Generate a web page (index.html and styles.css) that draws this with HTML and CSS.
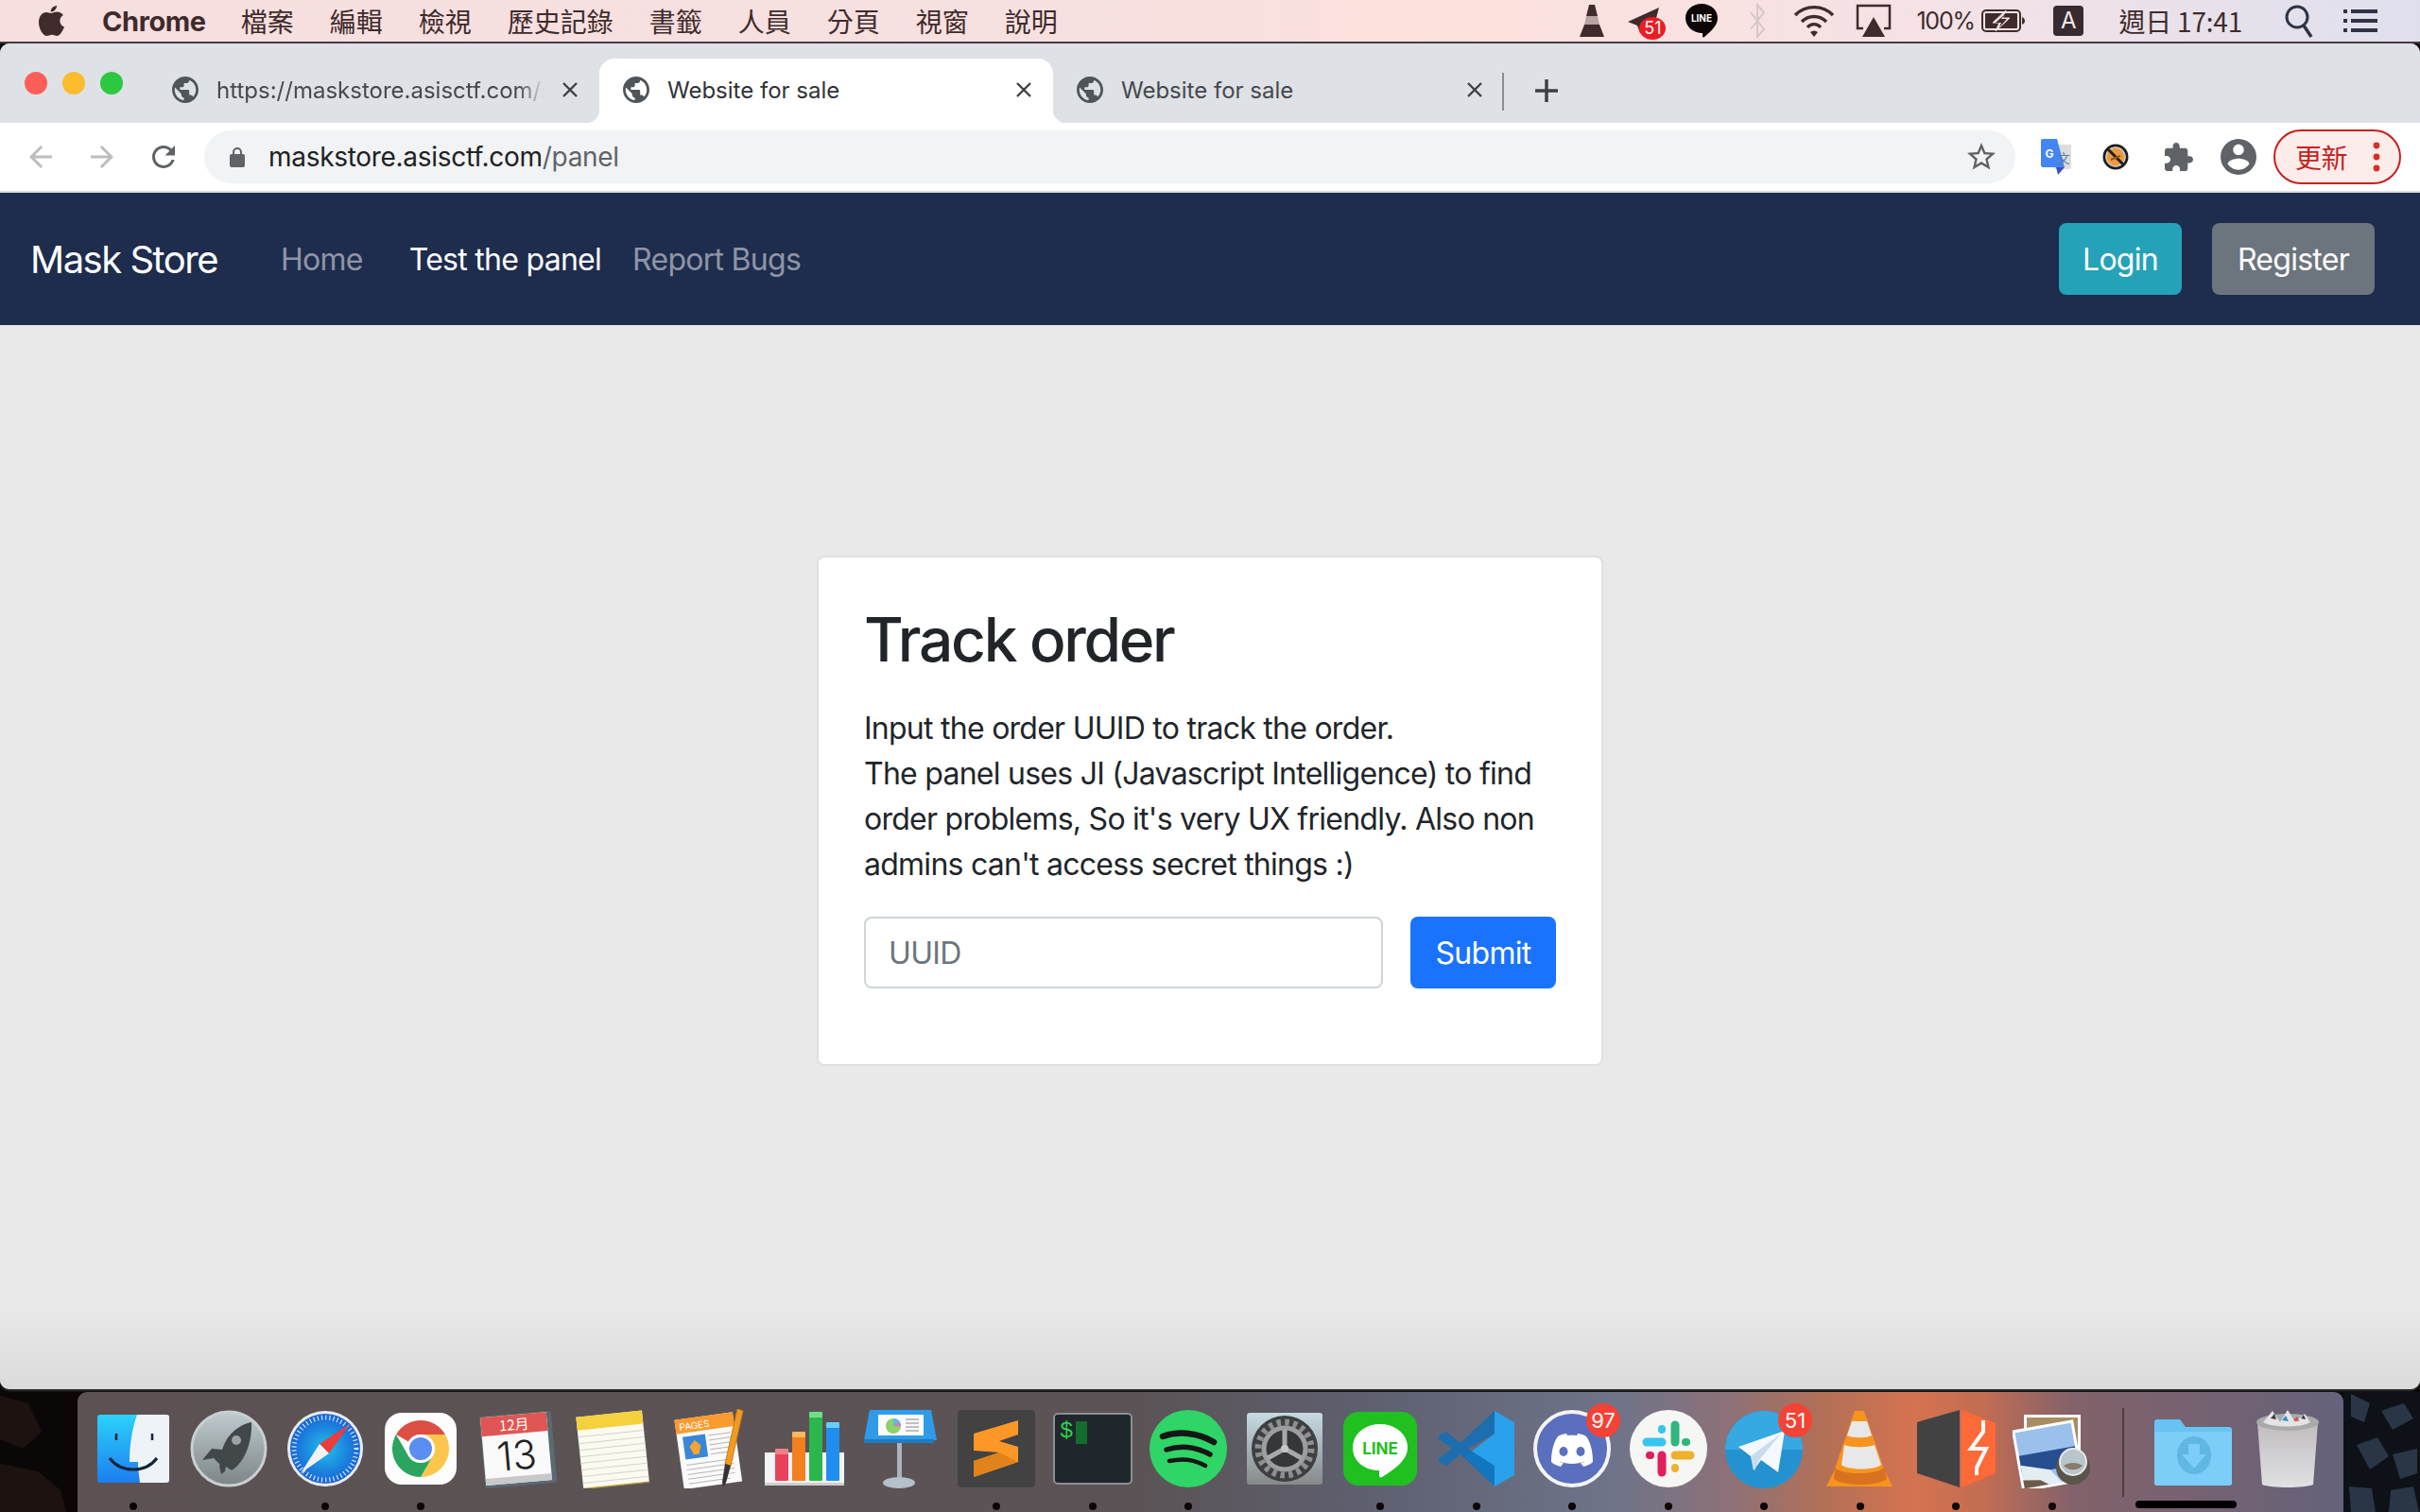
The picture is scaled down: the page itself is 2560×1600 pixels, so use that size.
FILE: index.html
```html
<!DOCTYPE html>
<html lang="en">
<head>
    <meta charset="UTF-8">
    <title>Website for sale</title>
    <link rel="stylesheet" href="styles.css">
</head>
<body>
    <!-- mac menu bar -->
    <div class="menubar">
        <svg class="apple" width="28" height="34" viewBox="0 0 28 34"><path fill="#3f2b2b" d="M19 1c.3 3-2.7 6.8-6.3 6.5C12.300 4.200 15.600 1.300 19 1zM13 9c1.500 0 3.500-1.500 6.500-1.500 2.400 0 4.900 1.200 6.400 3.500-5.300 3-4.400 10.500 1.100 12.500-1.600 4-4.600 9.500-7.500 9.500-2 0-3.200-1.300-5.500-1.300-2.400 0-3.700 1.300-5.500 1.300C4.500 33 0 25.500 0 18.500 0 12 4 8 8 8c2 0 3.600 1 5 1z"/></svg>
        <b class="app-name">Chrome</b>
        <span>檔案</span><span>編輯</span><span>檢視</span><span>歷史記錄</span><span>書籤</span><span>人員</span><span>分頁</span><span>視窗</span><span>說明</span>
        <div class="status">
            <svg width="30" height="36" viewBox="0 0 30 36"><path fill="#3f2b2b" d="M12 1h6l3 12H9z"/><path fill="#b9a3a3" d="M9 13h12l2 9H7z"/><path fill="#3f2b2b" d="M7 22h16l5 13H2z"/></svg>
            <span class="tray-send"><svg width="34" height="30" viewBox="0 0 34 30"><path fill="#3f2b2b" d="M33 1 0 16l10 4 3 8 4-5 9 4z"/></svg><i class="tray-badge">51</i></span>
            <svg class="tray-line-icon" width="36" height="38" viewBox="0 0 36 38"><path fill="#0d0506" d="M18 1c9.500 0 17 6.500 17 15 0 8-7 14-14 20-1 1-2 .5-2-1v-3C9 32 1 25 1 16 1 7.500 8.500 1 18 1z"/><text x="18" y="20" class="tray-line">LINE</text></svg>
            <svg class="tray-bt" width="20" height="38" viewBox="0 0 20 38"><path fill="none" stroke="#d7c6c8" stroke-width="2" d="M3 10l14 18-7 8V2l7 8L3 28"/></svg>
            <svg class="tray-wifi" width="44" height="36" viewBox="0 0 44 36"><g fill="none" stroke="#3f2b2b" stroke-width="3.400"><path d="M2 12a28 28 0 0 1 40 0"/><path d="M9 19a18 18 0 0 1 26 0"/><path d="M15 25a9 9 0 0 1 14 0"/></g><path fill="#3f2b2b" d="M22 35l-4-5a6 6 0 0 1 8 0z"/></svg>
            <svg class="tray-air" width="38" height="36" viewBox="0 0 38 36"><path fill="none" stroke="#3f2b2b" stroke-width="2.500" d="M8 26H2V2h34v24h-6"/><path fill="#3f2b2b" d="M19 14l12 21H7z"/></svg>
            <span class="pct">100%</span>
            <svg class="tray-batt" width="46" height="24" viewBox="0 0 46 24"><rect x="1" y="1" width="40" height="22" rx="4" fill="none" stroke="#3f2b2b" stroke-width="2"/><rect x="4" y="4" width="34" height="16" rx="1" fill="#3f2b2b"/><path fill="#f3e2e5" stroke="#f3e2e5" d="M26 1 12 14h7l-4 9 15-14h-8z"/><path fill="#3f2b2b" d="M25 5 15 14h6l-2 5 8-9h-6zM43 8c2 1 3 2 3 4s-1 3-3 4z"/></svg>
            <span class="input-a">A</span>
            <span class="clock">週日 17:41</span>
            <svg class="tray-search" width="32" height="36" viewBox="0 0 32 36"><circle cx="14" cy="14" r="11" fill="none" stroke="#2f3346" stroke-width="3"/><path stroke="#2f3346" stroke-width="3.500" d="M21 23l8 12"/></svg>
            <svg class="tray-list" width="36" height="24" viewBox="0 0 36 24"><g fill="#2f3346"><rect y="0" width="4" height="4"/><rect x="8" y="0" width="28" height="4"/><rect y="10" width="4" height="4"/><rect x="8" y="10" width="28" height="4"/><rect y="20" width="4" height="4"/><rect x="8" y="20" width="28" height="4"/></g></svg>
        </div>
    </div>

    <div class="window">
        <!-- tabs -->
        <div class="tabstrip">
            <div class="traffic">
                <i class="light red"></i><i class="light yellow"></i><i class="light green"></i>
            </div>
            <div class="tab">
                <svg class="globe" viewBox="2 2 20 20"><path fill="#50555a" d="M12 2C6.480 2 2 6.480 2 12s4.480 10 10 10 10-4.480 10-10S17.520 2 12 2zm-1 17.930c-3.950-.49-7-3.850-7-7.930 0-.62.08-1.210.21-1.790L9 15v1c0 1.100.9 2 2 2v1.930zm6.900-2.540c-.26-.81-1-1.390-1.900-1.390h-1v-3c0-.55-.45-1-1-1H8v-2h2c.55 0 1-.45 1-1V7h2c1.100 0 2-.9 2-2v-.41c2.930 1.190 5 4.060 5 7.410 0 2.080-.8 3.970-2.100 5.390z"/></svg>
                <span class="tab-title fade">https://maskstore.asisctf.com/s</span>
                <svg class="tab-close" viewBox="0 0 16 16"><path stroke="#3c4043" stroke-width="2.4" d="M1 1l14 14M15 1 1 15"/></svg>
            </div>
            <div class="tab active">
                <svg class="globe" viewBox="2 2 20 20"><path fill="#50555a" d="M12 2C6.480 2 2 6.480 2 12s4.480 10 10 10 10-4.480 10-10S17.520 2 12 2zm-1 17.930c-3.950-.49-7-3.850-7-7.930 0-.62.08-1.210.21-1.790L9 15v1c0 1.100.9 2 2 2v1.930zm6.900-2.540c-.26-.81-1-1.390-1.900-1.390h-1v-3c0-.55-.45-1-1-1H8v-2h2c.55 0 1-.45 1-1V7h2c1.100 0 2-.9 2-2v-.41c2.930 1.190 5 4.060 5 7.410 0 2.080-.8 3.970-2.100 5.390z"/></svg>
                <span class="tab-title">Website for sale</span>
                <svg class="tab-close" viewBox="0 0 16 16"><path stroke="#3c4043" stroke-width="2.4" d="M1 1l14 14M15 1 1 15"/></svg>
            </div>
            <div class="tab last">
                <svg class="globe" viewBox="2 2 20 20"><path fill="#50555a" d="M12 2C6.480 2 2 6.480 2 12s4.480 10 10 10 10-4.480 10-10S17.520 2 12 2zm-1 17.930c-3.950-.49-7-3.850-7-7.930 0-.62.08-1.210.21-1.790L9 15v1c0 1.100.9 2 2 2v1.930zm6.900-2.540c-.26-.81-1-1.390-1.900-1.390h-1v-3c0-.55-.45-1-1-1H8v-2h2c.55 0 1-.45 1-1V7h2c1.100 0 2-.9 2-2v-.41c2.930 1.190 5 4.060 5 7.410 0 2.080-.8 3.970-2.100 5.390z"/></svg>
                <span class="tab-title">Website for sale</span>
                <svg class="tab-close" viewBox="0 0 16 16"><path stroke="#3c4043" stroke-width="2.4" d="M1 1l14 14M15 1 1 15"/></svg>
            </div>
            <svg class="new-tab" width="26" height="26" viewBox="0 0 26 26"><path stroke="#3c4043" stroke-width="3.500" d="M13 1v24M1 13h24"/></svg>
        </div>

        <!-- toolbar -->
        <div class="toolbar">
            <svg class="tool" width="36" height="36" viewBox="0 0 24 24"><path fill="#bdbdbd" d="M20 11H7.830l5.590-5.590L12 4l-8 8 8 8 1.410-1.410L7.830 13H20v-2z"/></svg>
            <svg class="tool flip" width="36" height="36" viewBox="0 0 24 24"><path fill="#bdbdbd" d="M20 11H7.830l5.590-5.590L12 4l-8 8 8 8 1.410-1.410L7.830 13H20v-2z"/></svg>
            <svg class="tool" width="36" height="36" viewBox="0 0 24 24"><path fill="#5f6368" d="M17.650 6.350C16.200 4.900 14.210 4 12 4c-4.420 0-7.990 3.580-7.990 8s3.570 8 7.990 8c3.730 0 6.840-2.550 7.730-6h-2.080c-.82 2.330-3.040 4-5.650 4-3.310 0-6-2.690-6-6s2.690-6 6-6c1.660 0 3.140.69 4.220 1.780L13 11h7V4l-2.350 2.350z"/></svg>
            <div class="omnibox">
                <svg width="16" height="22" viewBox="0 0 16 22"><path fill="none" stroke="#5f6368" stroke-width="2" d="M4 9V6a4 4 0 0 1 8 0v3"/><rect y="8" width="16" height="14" rx="2" fill="#5f6368"/></svg>
                <span class="url">maskstore.asisctf.com<span class="url-path">/panel</span></span>
                <svg class="star" width="36" height="36" viewBox="0 0 24 24"><path fill="#5f6368" d="M22 9.240l-7.190-.62L12 2 9.190 8.630 2 9.240l5.460 4.730L5.820 21 12 17.270 18.180 21l-1.630-7.030L22 9.240zM12 15.400l-3.760 2.270 1-4.280-3.320-2.880 4.380-.38L12 6.100l1.710 4.040 4.380.38-3.320 2.880 1 4.280L12 15.400z"/></svg>
            </div>
            <div class="extensions">
                <svg width="32" height="38" viewBox="0 0 32 38"><path fill="#ddd" d="M14 6h16a2 2 0 0 1 2 2v22a2 2 0 0 1-2 2H14z"/><path fill="#4285f4" d="M2 0h15l8 30H2a2 2 0 0 1-2-2V2a2 2 0 0 1 2-2z"/><path fill="#3a4fb5" d="M16 30h9l-7 8z"/><text x="9" y="20" class="ext-g">G</text><text x="24" y="25" class="ext-wen">文</text></svg>
                <svg width="28" height="28" viewBox="0 0 28 28"><circle cx="14" cy="14" r="12" fill="#ee9a3c" stroke="#1e1e1e" stroke-width="3"/><circle cx="14" cy="14" r="10" fill="none" stroke="#c9c9c9" stroke-width="1.500"/><path stroke="#1e1e1e" stroke-width="3" d="M6 6l16 16"/><path stroke="#8a5a20" stroke-width="2" d="M9 17l10-4"/></svg>
                <svg class="ext-puzzle" width="30" height="30" viewBox="2 1 21 21"><path fill="#5f6368" d="M20.500 11H19V7c0-1.100-.9-2-2-2h-4V3.500C13 2.120 11.880 1 10.500 1S8 2.120 8 3.500V5H4c-1.100 0-1.990.9-1.990 2v3.800H3.500c1.490 0 2.700 1.210 2.700 2.700s-1.210 2.700-2.700 2.700H2V20c0 1.100.9 2 2 2h3.800v-1.500c0-1.490 1.210-2.700 2.700-2.700 1.490 0 2.700 1.210 2.700 2.700V22H17c1.100 0 2-.9 2-2v-4h1.500c1.380 0 2.500-1.120 2.500-2.500S21.880 11 20.500 11z"/></svg>
                <svg class="ext-profile" width="38" height="38" viewBox="2 2 20 20"><path fill="#5f6368" d="M12 2C6.480 2 2 6.480 2 12s4.480 10 10 10 10-4.480 10-10S17.520 2 12 2zm0 3c1.660 0 3 1.340 3 3s-1.340 3-3 3-3-1.340-3-3 1.340-3 3-3zm0 14.200c-2.500 0-4.710-1.280-6-3.220.03-1.990 4-3.080 6-3.080 1.990 0 5.970 1.090 6 3.080-1.290 1.940-3.500 3.220-6 3.220z"/></svg>
                <div class="update">更新<svg width="8" height="32" viewBox="0 0 8 32"><g fill="#d93025"><circle cx="4" cy="4" r="3.400"/><circle cx="4" cy="16" r="3.400"/><circle cx="4" cy="28" r="3.400"/></g></svg></div>
            </div>
        </div>

        <!-- page -->
        <nav class="navbar">
            <a class="brand">Mask Store</a>
            <a class="nav-link home">Home</a>
            <a class="nav-link current">Test the panel</a>
            <a class="nav-link">Report Bugs</a>
            <div class="nav-btns">
                <button class="btn btn-info">Login</button>
                <button class="btn btn-grey">Register</button>
            </div>
        </nav>
        <main class="page">
            <div class="card">
                <h2>Track order</h2>
                <p>Input the order UUID to track the order.<br>The panel uses JI (Javascript Intelligence) to find order problems, So it's very UX friendly. Also non admins can't access secret things :)</p>
                <form class="track-form">
                    <input type="text" placeholder="UUID">
                    <button type="button" class="btn btn-primary">Submit</button>
                </form>
            </div>
        </main>
    </div>

    <!-- dock -->
    <div class="bottom">
        <svg class="rocks" viewBox="0 0 82 127" preserveAspectRatio="none"><rect width="82" height="127" fill="#0c0707"/><path fill="#1c1310" d="M0 4l30 8 14 30-20 18L0 50zM0 76l40 8 24 20 6 23H0z"/></svg>
        <div class="dock">
            <div class="app on"><svg viewBox="0 0 84 84"><defs><linearGradient id="fi" x1="0" y1="0" x2="0" y2="1"><stop offset="0" stop-color="#2bd2fb"/><stop offset="1" stop-color="#1d7df0"/></linearGradient></defs><rect x="4" y="6" width="76" height="72" rx="3" fill="url(#fi)"/><path fill="#eef3f8" d="M46 6h31a3 3 0 0 1 3 3v66a3 3 0 0 1-3 3H49c-1-8-2-15-2-22h-9c0-18 3-36 8-50z"/><path stroke="#16233a" stroke-width="2.500" d="M24 26v7M62 26v7"/><path fill="none" stroke="#16233a" stroke-width="3" d="M17 52c12 16 38 16 50 0"/></svg></div>
            <div class="app"><svg viewBox="0 0 84 84"><defs><linearGradient id="lp" x1="0" y1="0" x2="0" y2="1"><stop offset="0" stop-color="#c0ccd0"/><stop offset="1" stop-color="#7c8486"/></linearGradient></defs><circle cx="42" cy="42" r="39" fill="url(#lp)" stroke="#c9cfd0" stroke-width="3"/><path fill="#42474a" d="M66 14c-14 3-26 13-31 29l-11-1-10 12 12-2 7 7-1 1 2 9 4-3 1-5 6 4c13-8 22-28 21-51z"/><circle cx="50" cy="33" r="5" fill="#9aa3a5"/></svg></div>
            <div class="app on"><svg viewBox="0 0 84 84"><defs><radialGradient id="sf"><stop offset="0" stop-color="#1fc0e8"/><stop offset="1" stop-color="#1a62d8"/></radialGradient></defs><circle cx="42" cy="42" r="40" fill="#e8edf0"/><circle cx="42" cy="42" r="37" fill="url(#sf)"/><circle cx="42" cy="42" r="33" fill="none" stroke="#cfe8fa" stroke-width="5" stroke-dasharray="1.200 3"/><path fill="#ef3b3b" d="M68 16 36 37l10 10z"/><path fill="#f3f3f3" d="M16 68l20-31 10 10z"/></svg></div>
            <div class="app on"><svg viewBox="0 0 84 84"><rect x="4" y="4" width="76" height="76" rx="18" fill="#fdfdfd"/><path fill="#db4f45" d="M16 27a30 30 0 0 1 52 0H42a15 15 0 0 0-13 7.500z"/><path fill="#fcc64d" d="M68 27a30 30 0 0 1-26 45l13-22.500A15 15 0 0 0 42 27z"/><path fill="#2aa45f" d="M42 72a30 30 0 0 1-26-45l13 22.500a15 15 0 0 0 26 0z"/><circle cx="42" cy="42" r="15" fill="#fff"/><circle cx="42" cy="42" r="12" fill="#5a8ef0"/></svg></div>
            <div class="app"><svg viewBox="0 0 84 84"><g transform="rotate(-5 42 42)"><rect x="5" y="5" width="76" height="76" rx="2" fill="#5a6a74"/><rect x="6" y="6" width="70" height="72" fill="#fafafa"/><rect x="6" y="6" width="70" height="20" fill="#e05654"/><text x="41" y="22" class="cal-month">12月</text><text x="41" y="64" class="cal-day">13</text><rect x="6" y="71" width="70" height="7" fill="#c9c9c9"/></g></svg></div>
            <div class="app"><svg viewBox="0 0 84 84"><g transform="rotate(-6 42 42)"><rect x="7" y="5" width="70" height="76" fill="#fbfaf0"/><rect x="7" y="5" width="70" height="14" fill="#f6d13e"/><path stroke="#d6d4c8" stroke-width="1" d="M7 26h70M7 33h70M7 40h70M7 47h70M7 54h70M7 61h70M7 68h70M7 75h70"/><path stroke="#b99a3c" stroke-width="1.500" d="M7 81h70"/></g></svg></div>
            <div class="app"><svg viewBox="0 0 84 84"><g transform="rotate(-8 42 42)"><rect x="10" y="7" width="62" height="74" fill="#fafafa"/><rect x="10" y="7" width="62" height="15" fill="#f99b2e"/><text x="14" y="19" class="pages-label">PAGES</text><rect x="16" y="26" width="24" height="24" fill="#3a86d8"/><path fill="#f6a431" d="M28 31l6 6-3 9h-6l-3-9z"/><path stroke="#b5b5b5" d="M43 28h24M43 33h24M43 38h24M43 43h24M43 48h24M16 56h50M16 61h50M16 66h50M16 71h50M16 76h44"/></g><path fill="#f39a24" stroke="#c97a16" d="M72 0l6 2-13 58-6-2z"/><path fill="#333" d="M59 58l6 2-5 18-3 5-1-6z"/></svg></div>
            <div class="app"><svg viewBox="0 0 84 84"><path fill="#f4f4f4" d="M0 46h84v34H0z"/><rect y="78" width="84" height="3" fill="#cfcfcf"/><rect x="11" y="44" width="14" height="32" rx="1" fill="#e8435a"/><rect x="11" y="42" width="14" height="6" rx="1" fill="#f27f88"/><rect x="29" y="26" width="14" height="50" rx="1" fill="#f37f1e"/><rect x="29" y="24" width="14" height="6" rx="1" fill="#fbb65e"/><rect x="47" y="4" width="14" height="72" rx="1" fill="#2cb64e"/><rect x="47" y="3" width="14" height="6" rx="1" fill="#6fe08a"/><rect x="65" y="16" width="14" height="60" rx="1" fill="#1f8ef0"/><rect x="65" y="14" width="14" height="6" rx="1" fill="#69cdfc"/></svg></div>
            <div class="app"><svg viewBox="0 0 84 84"><path fill="#2f9be8" d="M9 1h65l6 32H3z"/><rect x="3" y="32" width="74" height="4" fill="#1d7cc4"/><rect x="18" y="6" width="48" height="22" fill="#fafafa"/><circle cx="34" cy="18" r="8" fill="#8fd16a"/><path fill="#5fb6e8" d="M34 18v-8a8 8 0 0 1 7 4z"/><path fill="#e86ac4" d="M34 18l7-4a8 8 0 0 1 1 4z"/><path stroke="#888" d="M47 11h14M47 15h14M47 19h14M47 23h14"/><rect x="38" y="36" width="5" height="40" fill="#a8b4be"/><ellipse cx="40" cy="78" rx="17" ry="6" fill="#b4c0ca"/></svg></div>
            <div class="app on"><svg viewBox="0 0 84 84"><rect x="1" y="1" width="82" height="82" rx="4" fill="#424242"/><path fill="#fd9827" d="M18 26 65 12V27L45 34 65 40V56L18 72V55L45 46 18 44z"/><path fill="#e0831c" d="M18 55 45 46 65 56 18 72z"/></svg></div>
            <div class="app on"><svg viewBox="0 0 84 84"><rect x="1" y="5" width="82" height="74" rx="4" fill="#1f272d" stroke="#8a9095" stroke-width="2"/><text x="7" y="30" class="term-prompt">$</text><rect x="24" y="13" width="12" height="24" fill="#166c2c"/></svg></div>
            <div class="app on"><svg viewBox="0 0 84 84"><circle cx="42" cy="42" r="41" fill="#2fd566"/><g fill="none" stroke="#161616" stroke-linecap="round"><path stroke-width="6.500" d="M15 29c17-6 37-4 54 6"/><path stroke-width="5.500" d="M19 43c15-5 31-3 46 5"/><path stroke-width="4.500" d="M22 55c13-3 26-2 38 5"/></g></svg></div>
            <div class="app"><svg viewBox="0 0 84 84"><defs><linearGradient id="sp" x1="0" y1="0" x2="0" y2="1"><stop offset="0" stop-color="#c7dae2"/><stop offset="1" stop-color="#86898a"/></linearGradient></defs><rect x="2" y="4" width="80" height="76" rx="3" fill="url(#sp)"/><circle cx="42" cy="42" r="35" fill="#3d3f41"/><circle cx="42" cy="42" r="28" fill="none" stroke="#8d8f91" stroke-width="7" stroke-dasharray="4.500 4.300"/><circle cx="42" cy="42" r="22" fill="none" stroke="#9c9ea0" stroke-width="5"/><circle cx="42" cy="42" r="19" fill="#35373a"/><path stroke="#a7a9ab" stroke-width="5" d="M42 42V22M42 42l18 10M42 42l-18 10"/><circle cx="42" cy="42" r="4" fill="#c4c6c8"/></svg></div>
            <div class="app on"><svg viewBox="0 0 84 84"><rect x="3" y="3" width="78" height="78" rx="16" fill="#1fc01f"/><path fill="#fff" d="M42 16c16 0 29 10 29 25 0 14-16 24-27 31-2 1-3 0-3-2v-5C25 65 13 55 13 41c0-15 13-25 29-25z"/><text x="42" y="48" class="line-word">LINE</text></svg></div>
            <div class="app on"><svg viewBox="0 0 84 84"><path fill="#2aa1ec" d="M61 2 82 14v56L61 82 30 50l31-24z"/><path fill="#0f70b7" d="M61 2 25 36 10 24 2 28v4l14 10L2 52v4l8 4 15-12 36 34V60L33 42l28-16z" opacity=".85"/></svg></div>
            <div class="app on"><svg viewBox="0 0 84 84"><circle cx="42" cy="42" r="39" fill="#5a6fbe" stroke="#f4f4f4" stroke-width="4"/><path fill="#fff" d="M20 56c0-12 3-22 7-27 5-3 9-3 9-3l1 2c3-.5 7-.5 10 0l1-2s4 0 9 3c4 5 7 15 7 27-3 3-7 4-10 5l-3-4c2 0 3-1 5-2-9 4-19 4-28 0 2 1 3 2 5 2l-3 4c-3-1-7-2-10-5z"/><ellipse cx="33" cy="45" rx="4.500" ry="5" fill="#5a6fbe"/><ellipse cx="51" cy="45" rx="4.500" ry="5" fill="#5a6fbe"/></svg><i class="badge">97</i></div>
            <div class="app on"><svg viewBox="0 0 84 84"><circle cx="42" cy="42" r="41" fill="#f6f6f4"/><g stroke-linecap="round" stroke-width="9"><path stroke="#36c5f0" d="M19 35h16"/><path stroke="#2eb67d" d="M49 17v18"/><path stroke="#2eb67d" stroke-width="8" d="M60 35h1"/><path stroke="#ecb22e" d="M49 49h16"/><path stroke="#ecb22e" stroke-width="8" d="M49 62v1"/><path stroke="#e01e5a" d="M35 49v18"/><path stroke="#e01e5a" stroke-width="8" d="M22 49h1"/><path stroke="#36c5f0" stroke-width="8" d="M35 21v1"/></g></svg></div>
            <div class="app on"><svg viewBox="0 0 84 84"><circle cx="42" cy="43" r="41" fill="#2492d0"/><path fill="#36a8e2" d="M42 2a41 41 0 0 1 41 41H1A41 41 0 0 1 42 2z"/><path fill="#f4f9fd" d="M15 40 64 23l-7 44-18-13-8 11-3-15z"/><path fill="#c8dcee" d="M28 50 60 26 37 54l-5 11z"/></svg><i class="badge">51</i></div>
            <div class="app on"><svg viewBox="0 0 84 84"><path fill="#f7941e" d="M36 2h10l22 64 8 16H6l8-16z"/><path fill="#e8e8e8" d="M33 13h16l5 15c-5 3-21 3-26 0zM25 38c7 3 25 3 32 0l7 21c-6 6-36 6-42 0z"/><path fill="#d97220" d="M15 62c8 8 44 8 52 0l3 12c-10 8-46 8-56 0z"/></svg></div>
            <div class="app on"><svg viewBox="0 0 84 84"><path fill="#424242" d="M1 14 46 1v82L1 68z"/><path fill="#fd6a38" d="M48 1l36 14v53L48 83z"/><path fill="none" stroke="#fff" stroke-width="4" d="M71 12v12L58 42h16L64 62v8"/></svg></div>
            <div class="app on"><svg viewBox="0 0 84 84"><rect x="12" y="6" width="60" height="50" fill="#fff"/><rect x="15" y="9" width="54" height="44" fill="#a88d63"/><g transform="rotate(-10 40 48)"><rect x="4" y="16" width="66" height="66" fill="#fff"/><rect x="7" y="19" width="60" height="60" fill="#9cc0ec"/><path fill="#274e8e" d="M7 44h60v20H7z"/><path fill="#e4eef2" d="M7 54l30 10 10 15H7z"/><path fill="#6f5a48" d="M7 70l18 3 8 6H7z"/></g><circle cx="64" cy="62" r="18" fill="#5c534a"/><circle cx="64" cy="56" r="14" fill="#b9c4cc" stroke="#e8e8e8" stroke-width="2"/><path fill="#8a7a68" d="M54 60c6-4 14-4 20 0a14 14 0 0 1-20 0z"/></svg></div>
            <i class="dock-sep"></i>
            <div class="stack">
                <div class="app small"><svg viewBox="0 0 84 84"><path fill="#66c3f2" d="M1 14a3 3 0 0 1 3-3h24l6 8h46a3 3 0 0 1 3 3v56a3 3 0 0 1-3 3H4a3 3 0 0 1-3-3z"/><path fill="#7ccdf7" d="M1 24h82v54a3 3 0 0 1-3 3H4a3 3 0 0 1-3-3z"/><ellipse cx="43" cy="49" rx="18" ry="20" fill="#5fb7e2"/><path fill="#7ccdf7" d="M37 37h12v11h7L43 63 30 48h7z"/></svg></div>
                <div class="app small"><svg viewBox="0 0 84 84"><defs><linearGradient id="tr" x1="0" y1="0" x2="0" y2="1"><stop offset="0" stop-color="#c9c6c6"/><stop offset="1" stop-color="#eef0f0"/></linearGradient></defs><path fill="url(#tr)" opacity=".9" d="M10 14h64l-5 66c-10 4-44 4-54 0z"/><ellipse cx="42" cy="14" rx="33" ry="9" fill="#a9abab"/><path fill="#e4e4e4" d="M16 14l10-12 8 12 8-13 8 13 10-9 6 9c-10 6-40 6-50 0z"/><path fill="#2e8ecf" d="M36 12l4-5 3 6z"/><path fill="#d24a4a" d="M48 12l4-4 2 5z"/><path fill="#3a3f44" d="M24 10l4-5 2 6zM56 10l3-4 2 5z"/></svg></div>
            </div>
        </div>
        <svg class="rocks" viewBox="0 0 81 127" preserveAspectRatio="none"><rect width="81" height="127" fill="#0e1218"/><path fill="#2a3646" d="M8 2l20 10-6 20-14-6zM40 20l24-8 10 16-22 12zM14 56l22-8 12 20-20 14zM52 66l26-6v26l-18 6zM6 100l24 2 4 25H8zM50 104l24-4 6 27H48z"/></svg>
    </div>
</body>
</html>
```

FILE: styles.css
```css
* {
    box-sizing: border-box;
}
html, body {
    margin: 0;
    height: 100%;
}
body {
    width: 2560px;
    height: 1600px;
    overflow: hidden;
    display: flex;
    flex-direction: column;
    background: #0c0707;
    font-family: Inter, "Noto Sans", sans-serif;
    color: #212529;
}

/* menu bar */
.menubar {
    height: 46px;
    flex: none;
    display: flex;
    align-items: center;
    gap: 38px;
    padding-left: 41px;
    border-bottom: 2px solid #4a3b40;
    background: linear-gradient(90deg, #f7dfe0 0%, #f7e0e0 45%, #fde1dc 60%, #f4e2e6 80%, #dfe0ee 100%);
    font-family: "Noto Sans CJK TC", sans-serif;
    font-size: 28px;
    color: #3f2b2b;
}
.app-name {
    margin-left: 1px;
    margin-right: -1px;
    font-family: Inter, sans-serif;
    font-size: 29px;
    letter-spacing: -.4px;
}
.status {
    margin-left: auto;
    display: flex;
    align-items: center;
    gap: 26px;
    padding-right: 45px;
}
.tray-send {
    position: relative;
    display: flex;
    margin-left: -3px;
}
.tray-badge {
    position: absolute;
    left: 12px;
    top: 11px;
    width: 28px;
    height: 24px;
    border-radius: 50%;
    background: #ec1c24;
    color: #fff;
    font: normal 18px/24px Inter, sans-serif;
    text-align: center;
}
.tray-line {
    font: bold 10px Inter, sans-serif;
    fill: #fff;
    text-anchor: middle;
}
.tray-bt { margin-left: 5px; }
.tray-wifi { margin-left: 2px; }
.tray-air { margin-left: -4px; }
.tray-batt { margin-left: -16px; }
.tray-search { margin-left: 18px; }
.tray-list { margin-left: 5px; }
.pct {
    width: 59px;
    font-family: Inter, sans-serif;
    font-size: 25px;
    letter-spacing: -1.2px;
    white-space: nowrap;
}
.clock {
    margin-left: 11px;
    font-size: 28px;
    letter-spacing: -.2px;
    white-space: nowrap;
}
.input-a {
    width: 32px;
    height: 32px;
    margin-left: 4px;
    border-radius: 4px;
    background: #372b30;
    color: #f5e8ea;
    font: 24px/32px Inter, sans-serif;
    text-align: center;
}

/* browser window */
.window {
    height: 1424px;
    flex: none;
    display: flex;
    flex-direction: column;
    border-radius: 10px;
    overflow: hidden;
    background: #e9e9e9;
    box-shadow: 0 2px 2px #333;
}
.tabstrip {
    height: 84px;
    flex: none;
    display: flex;
    align-items: flex-end;
    background: #dee1e6;
}
.traffic {
    width: 157px;
    flex: none;
    align-self: center;
    display: flex;
    gap: 16px;
    padding-left: 26px;
    margin-top: -1px;
}
.light {
    width: 24px;
    height: 24px;
    border-radius: 50%;
}
.red { background: #fc5f57; }
.yellow { background: #fdbc2e; }
.green { background: #2bc840; }
.tab {
    position: relative;
    width: 477px;
    height: 68px;
    flex: none;
    display: flex;
    align-items: center;
    gap: 19px;
    padding: 0 23px 2px 25px;
    font-size: 24px;
    color: #45484c;
}
.tab.active {
    width: 480px;
    background: #fff;
    border-radius: 16px 16px 0 0;
    color: #303236;
}
.tab.active::before, .tab.active::after {
    content: "";
    position: absolute;
    bottom: 0;
    width: 14px;
    height: 14px;
}
.tab.active::before {
    left: -14px;
    background: radial-gradient(circle at 0 0, transparent 14px, #fff 14.5px);
}
.tab.active::after {
    right: -14px;
    background: radial-gradient(circle at 100% 0, transparent 14px, #fff 14.5px);
}
.tab.last::after {
    content: "";
    position: absolute;
    right: 0;
    top: 15px;
    height: 40px;
    border-right: 2px solid #8a8d91;
}
.globe {
    width: 28px;
    height: 28px;
    flex: none;
}
.tab-title {
    flex: 1;
    min-width: 0;
    white-space: nowrap;
}
.fade {
    -webkit-mask-image: linear-gradient(90deg, #000 92%, transparent);
}
.tab-close {
    width: 16px;
    height: 16px;
    flex: none;
}
.new-tab {
    margin: 0 0 21px 32px;
}
.toolbar {
    height: 74px;
    flex: none;
    display: flex;
    align-items: center;
    gap: 29px;
    padding-left: 25px;
    background: #fff;
    border-bottom: 2px solid #dadce0;
}
.flip {
    transform: scaleX(-1);
}
.omnibox {
    width: 1916px;
    height: 56px;
    margin-left: -4px;
    display: flex;
    align-items: center;
    gap: 25px;
    padding: 0 18px 0 27px;
    border-radius: 28px;
    background: #f1f3f4;
    font-size: 28px;
    letter-spacing: -.3px;
    color: #202124;
}
.url-path {
    color: #5f6368;
}
.star {
    margin-left: auto;
}
.extensions {
    display: flex;
    align-items: center;
    gap: 33px;
    margin-left: -2px;
}
.ext-puzzle { margin-left: 5px; }
.ext-profile { margin-left: -4px; }
.ext-g {
    font: bold 12px Inter, sans-serif;
    fill: #fff;
    text-anchor: middle;
}
.ext-wen {
    font: 13px "Noto Sans CJK TC", sans-serif;
    fill: #5a7f9c;
    text-anchor: middle;
}
.update {
    width: 135px;
    height: 58px;
    margin-left: -15px;
    display: flex;
    align-items: center;
    justify-content: space-between;
    padding: 0 20px 0 21px;
    border: 2.5px solid #c5221f;
    border-radius: 29px;
    background: #fcecea;
    color: #c5221f;
    font-family: "Noto Sans CJK TC", sans-serif;
    font-size: 28px;
    letter-spacing: -.5px;
}

/* page */
.navbar {
    height: 140px;
    flex: none;
    display: flex;
    align-items: center;
    padding: 0 48px 0 32px;
    background: #1e2c4d;
    color: rgba(255, 255, 255, .5);
    font-size: 32px;
    letter-spacing: -.72px;
}
.brand {
    font-size: 40px;
    letter-spacing: -1.5px;
    color: #fff;
    margin-right: 67px;
}
.nav-link {
    margin-right: 33px;
}
.nav-link.home {
    margin-right: 49px;
}
.current {
    color: #fff;
}
.nav-btns {
    margin-left: auto;
    display: flex;
    gap: 32px;
}
.btn {
    height: 76px;
    padding: 0;
    border: none;
    border-radius: 8px;
    font-family: inherit;
    font-size: 32px;
    letter-spacing: -.72px;
    color: #fff;
}
.btn-info {
    width: 130px;
    background: #25a2b8;
}
.btn-grey {
    width: 172px;
    background: #6c757d;
}
.btn-primary {
    width: 154px;
    flex: none;
    background: #1a73fd;
}
.page {
    flex: 1;
    padding-top: 244px;
    background: linear-gradient(180deg, #e9e9e9 92%, #dbdbdb 100%);
}
.card {
    width: 832px;
    margin: 0 auto;
    padding: 48px 48px 80px;
    background: #fff;
    border: 2px solid #e0e0e0;
    border-radius: 8px;
}
.card h2 {
    margin: 0 0 32px;
    font-size: 64px;
    font-weight: 500;
    line-height: 77px;
    letter-spacing: -2.3px;
}
.card p {
    margin: 0 0 31px;
    font-size: 32px;
    line-height: 48px;
    letter-spacing: -.74px;
}
.track-form {
    display: flex;
    gap: 29px;
}
.track-form input {
    flex: 1;
    min-width: 0;
    height: 76px;
    padding: 0 24px;
    border: 2px solid #ced4da;
    border-radius: 8px;
    font-family: inherit;
    font-size: 32px;
    letter-spacing: -.65px;
}
.track-form input::placeholder {
    color: #6c757d;
}

/* dock */
.bottom {
    flex: 1;
    display: flex;
    margin-top: 3px;
    min-height: 0;
}
.rocks {
    width: 82px;
    flex: none;
    height: 127px;
}
.rocks:last-child {
    width: 81px;
}
.dock {
    flex: 1;
    display: flex;
    padding-left: 8px;
    border-radius: 10px 10px 0 0;
    background: linear-gradient(90deg, #5c5253 0%, #5b5356 47%, #5e6070 57%, #6f7489 68%, #8e7178 73%, #b27057 77%, #d47350 81%, #c46d52 84%, #83626a 88%, #65627a 100%);
}
.app {
    position: relative;
    width: 101.5px;
    flex: none;
    padding-top: 18px;
    display: flex;
    flex-direction: column;
    align-items: center;
}
.app svg {
    width: 84px;
    height: 84px;
    flex: none;
}
.app.on::after {
    content: "";
    width: 8px;
    height: 8px;
    margin-top: 15px;
    border-radius: 50%;
    background: #0c0404;
}
.app.small {
    width: 100px;
}
.badge {
    position: absolute;
    right: 0;
    top: 12px;
    width: 36px;
    height: 36px;
    border-radius: 50%;
    background: #f44336;
    color: #fff;
    font: normal 22px/36px Inter, sans-serif;
    text-align: center;
}
.cal-month {
    font: 15px "Noto Sans CJK TC", sans-serif;
    fill: #fff;
    text-anchor: middle;
}
.cal-day {
    font: 300 42px Inter, sans-serif;
    fill: #222;
    text-anchor: middle;
}
.pages-label {
    font: 10px Inter, sans-serif;
    fill: #fff;
}
.term-prompt {
    font: 24px "Liberation Mono", monospace;
    fill: #2bd24b;
}
.line-word {
    font: bold 17px Inter, sans-serif;
    fill: #1fc01f;
    text-anchor: middle;
}
.dock-sep {
    width: 2px;
    height: 94px;
    flex: none;
    margin: 17px 23px 0;
    background: #4b3d40;
}
.stack {
    position: relative;
    display: flex;
}
.stack::after {
    content: "";
    position: absolute;
    left: -11px;
    top: 115px;
    width: 107px;
    height: 8px;
    border-radius: 4px;
    background: #000;
}
```
